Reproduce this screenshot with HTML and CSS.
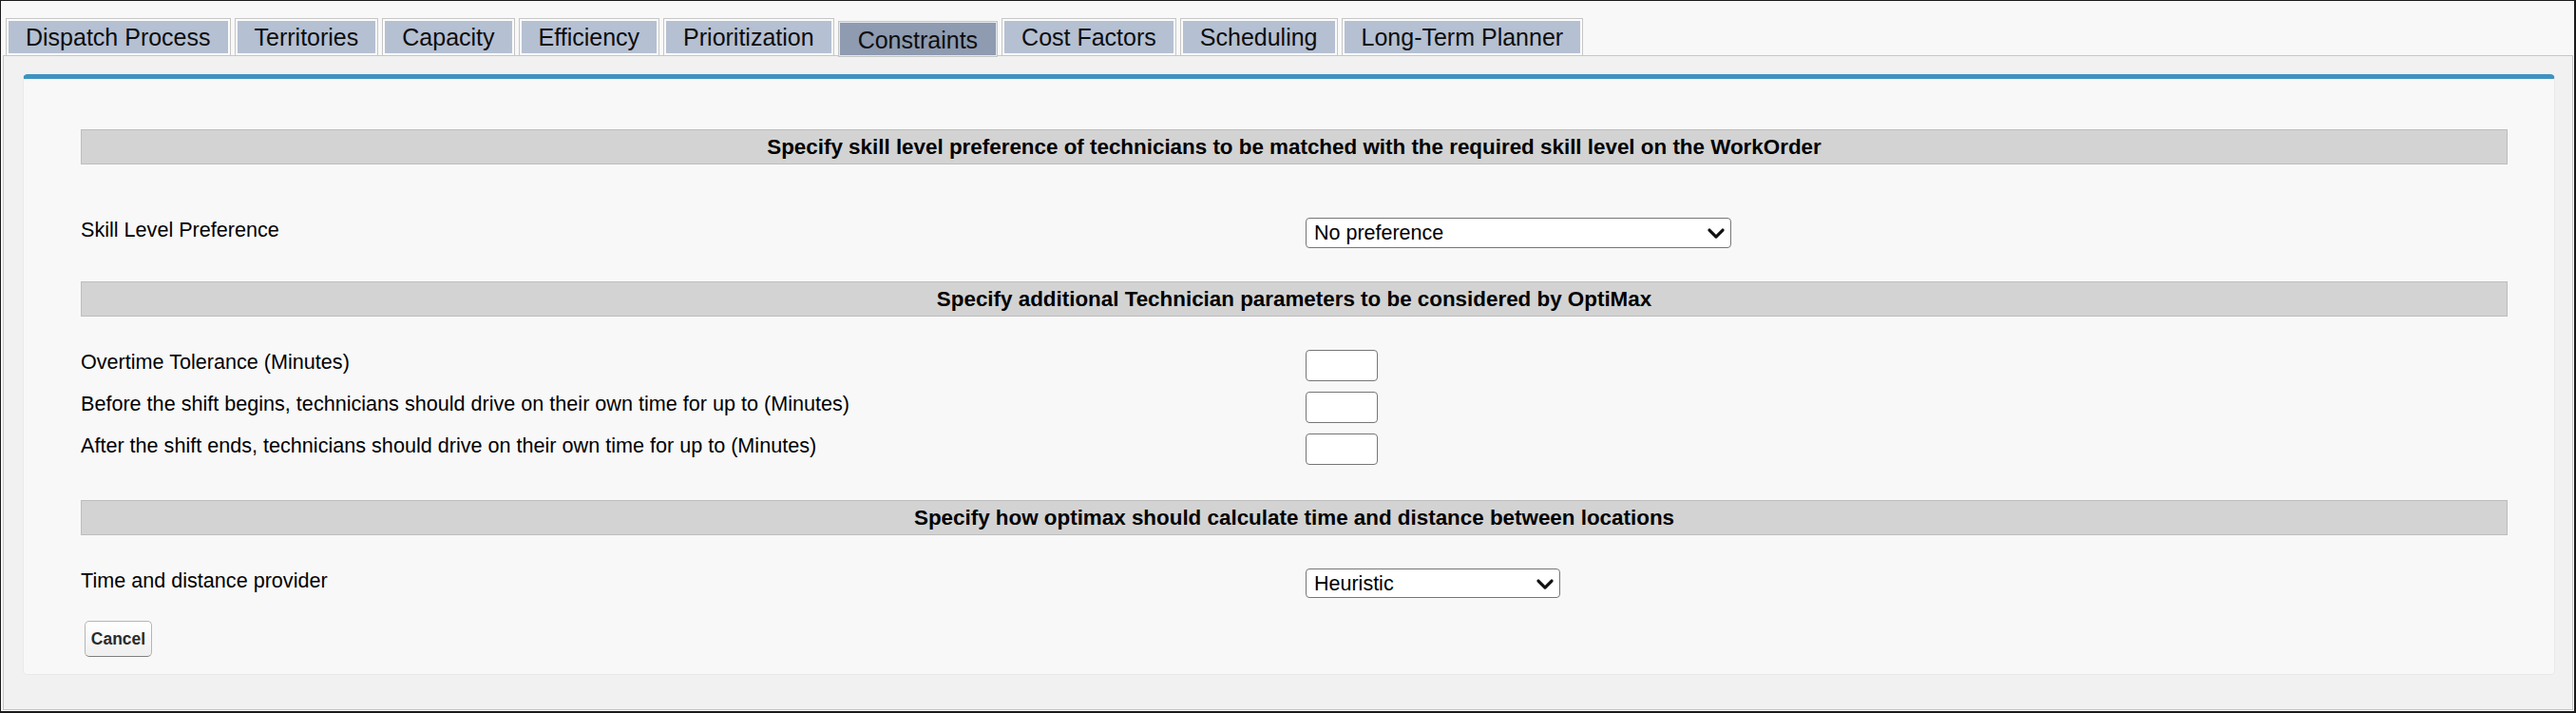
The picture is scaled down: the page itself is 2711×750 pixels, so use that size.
FILE: index.html
```html
<!DOCTYPE html>
<html>
<head>
<meta charset="utf-8">
<link rel="stylesheet" href="styles.css">
</head>
<body>
<div class="frame">
  <div class="tabs">
    <div class="tab">Dispatch Process</div>
    <div class="tab">Territories</div>
    <div class="tab">Capacity</div>
    <div class="tab">Efficiency</div>
    <div class="tab">Prioritization</div>
    <div class="tab active">Constraints</div>
    <div class="tab">Cost Factors</div>
    <div class="tab">Scheduling</div>
    <div class="tab">Long-Term Planner</div>
  </div>
  <div class="panel">
    <div class="card">
      <div class="section-head">Specify skill level preference of technicians to be matched with the required skill level on the WorkOrder</div>
      <div class="row first">
        <div class="label">Skill Level Preference</div>
        <div class="value">
          <span class="selwrap wide">
            <select class="sel"><option>No preference</option></select>
            <svg class="chev" width="18" height="11" viewBox="0 0 18 11"><polyline points="2,2 9,9 16,2" fill="none" stroke="#111" stroke-width="3.2" stroke-linecap="round" stroke-linejoin="round"/></svg>
          </span>
        </div>
      </div>
      <div class="section-head">Specify additional Technician parameters to be considered by OptiMax</div>
      <div class="rows">
        <div class="row tight">
          <div class="label">Overtime Tolerance (Minutes)</div>
          <div class="value"><input class="num" type="text"></div>
        </div>
        <div class="row tight">
          <div class="label">Before the shift begins, technicians should drive on their own time for up to (Minutes)</div>
          <div class="value"><input class="num" type="text"></div>
        </div>
        <div class="row tight">
          <div class="label">After the shift ends, technicians should drive on their own time for up to (Minutes)</div>
          <div class="value"><input class="num" type="text"></div>
        </div>
      </div>
      <div class="section-head">Specify how optimax should calculate time and distance between locations</div>
      <div class="row">
        <div class="label">Time and distance provider</div>
        <div class="value">
          <span class="selwrap narrow">
            <select class="sel short"><option>Heuristic</option></select>
            <svg class="chev" width="18" height="11" viewBox="0 0 18 11"><polyline points="2,2 9,9 16,2" fill="none" stroke="#111" stroke-width="3.2" stroke-linecap="round" stroke-linejoin="round"/></svg>
          </span>
        </div>
      </div>
      <div class="actions">
        <button class="btn" type="button">Cancel</button>
      </div>
    </div>
  </div>
</div>
</body>
</html>
```
FILE: styles.css
```css
* { box-sizing: border-box; }
html, body { margin: 0; padding: 0; }
body {
  font-family: "Liberation Sans", Arial, sans-serif;
  color: #000;
  background: #f8f8f8;
}
.frame {
  width: 2711px;
  height: 750px;
  border-top: 1px solid #1a1a1a;
  border-left: 1px solid #1a1a1a;
  border-right: 2px solid #1a1a1a;
  border-bottom: 2px solid #1a1a1a;
  background: #f8f8f8;
  padding-top: 18px;
  display: flex;
  flex-direction: column;
}
.tabs {
  display: flex;
  gap: 4px;
  margin-left: 5px;
  height: 39px;
  align-items: flex-start;
  position: relative;
  z-index: 1;
}
.tab {
  height: 40px;
  padding: 1px 20px 0;
  border: 1px solid #c6c6c6;
  box-shadow: inset 0 0 0 2px #fbfbfb;
  background: #b5c0d2;
  font-size: 25px;
  line-height: 37px;
  white-space: nowrap;
  color: #0d0d0d;
}
.tab.active {
  margin-top: 3px;
  height: 38px;
  line-height: 36px;
  background: #8e9bb1;
  box-shadow: inset 0 0 0 1px #e4e7ec;
}
.panel {
  margin: 0 1px 1px 2px;
  flex: 1;
  border: 1px solid #c6c6c6;
  background: #f1f1f1;
  padding: 19px 18px 36px 20px;
  display: flex;
  flex-direction: column;
}
.card {
  flex: 1;
  background: #f8f8f8;
  border: 1px solid #e9e9e9;
  border-top: 5px solid #3e93c0;
  border-radius: 5px;
  padding: 53px 49px 15px 60px;
}
.section-head {
  height: 37px;
  border: 1px solid #bdbdbd;
  background: #d3d3d3;
  text-align: center;
  font-weight: bold;
  font-size: 22.4px;
  line-height: 35px;
  color: #000;
}
.row {
  display: grid;
  grid-template-columns: 1289px 1fr;
  align-items: start;
  margin: 35px 0;
}
.row.first { margin-top: 56px; }
.rows {
  display: flex;
  flex-direction: column;
  gap: 11px;
  margin: 35px 0 37px;
}
.rows .row { margin: 0; }
.label {
  font-size: 21.6px;
  line-height: 24px;
  padding-top: 1px;
  white-space: nowrap;
}
.value { display: flex; }
.selwrap {
  position: relative;
  display: inline-block;
}
.sel {
  appearance: none;
  -webkit-appearance: none;
  display: block;
  width: 448px;
  height: 32px;
  border: 1px solid #767676;
  border-radius: 4px;
  background: #fff;
  font-family: "Liberation Sans", Arial, sans-serif;
  font-size: 21.5px;
  color: #000;
  padding: 0 30px 0 8px;
  margin: 0;
}
.sel.short {
  width: 268px;
  height: 31px;
}
.chev {
  position: absolute;
  right: 7px;
  top: 50%;
  transform: translateY(-45%);
  pointer-events: none;
}
.num {
  width: 76px;
  height: 33px;
  border: 1px solid #767676;
  border-radius: 4px;
  background: #fff;
  margin: 0;
  padding: 0 4px;
  font-size: 21px;
}
.actions {
  display: flex;
  margin-top: -11px;
  padding-left: 4px;
}
.btn {
  width: 71px;
  height: 38px;
  border: 1px solid #b5b5b5;
  border-bottom-color: #7f7f7f;
  border-radius: 5px;
  background: linear-gradient(#ffffff, #efefef);
  color: #2b2b2b;
  font-family: "Liberation Sans", Arial, sans-serif;
  font-weight: bold;
  font-size: 17.5px;
  padding: 0;
  margin: 0;
}
```
